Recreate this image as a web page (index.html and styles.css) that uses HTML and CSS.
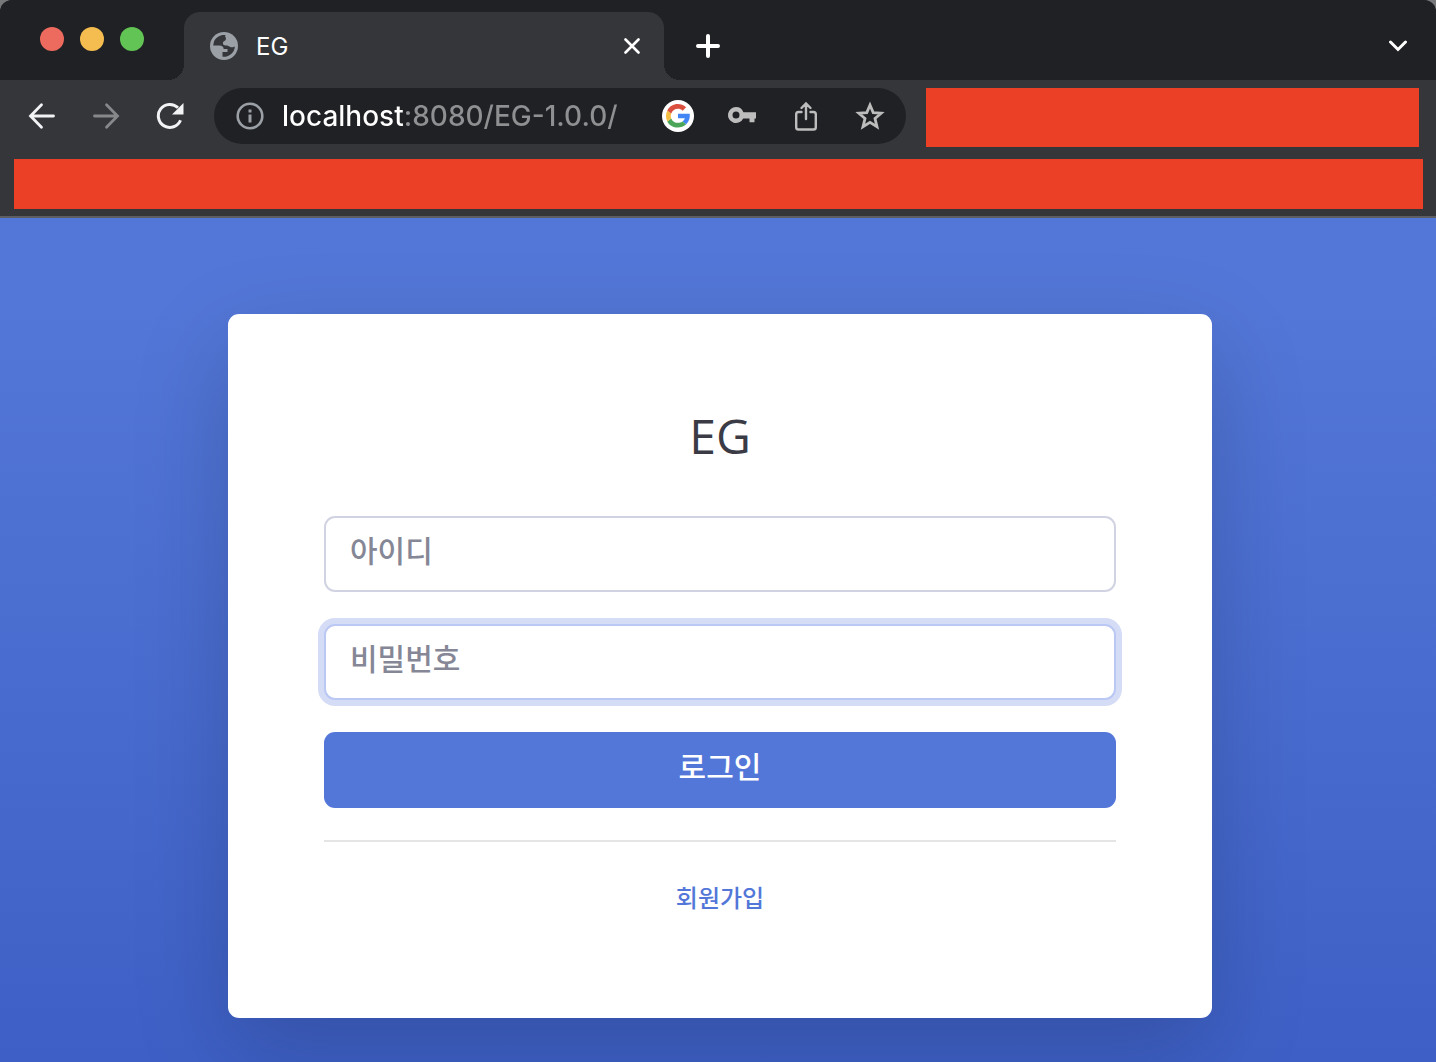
FILE: index.html
```html
<!DOCTYPE html>
<html lang="ko">

<head>
    <meta charset="utf-8">
    <meta name="viewport" content="width=device-width, initial-scale=1.0">
    <title>EG</title>
    <link rel="stylesheet" href="styles.css">
</head>

<body>
    <header class="browser">
        <div class="tabs">
            <div class="lights">
                <button class="light red" aria-label="Close window"></button>
                <button class="light yellow" aria-label="Minimize"></button>
                <button class="light green" aria-label="Zoom"></button>
            </div>
            <div class="tab">
                <svg class="globe" width="28" height="28" viewBox="0 0 28 28">
                    <circle cx="14" cy="14" r="14" fill="#9aa0a6" />
                    <path d="M15.5 3.1C11 2.4 6 4.9 4 9.5L3.2 13.5H9.5C12 13.5 13.7 15 13.7 17H17.5V20H12.5V24.8C19 25.5 24.8 20.5 24.8 14.5C23.5 15 23 15.5 21 15.2C19 14.8 18.3 13.2 16.5 13.5C14 13.8 12.5 12.5 13 10.5C13.5 8.8 16 9 16 6.5C15.8 5.3 14.5 4.5 15.5 3.1Z" fill="#35363a" />
                </svg>
                <span class="tab-title">EG</span>
                <button class="icon close" aria-label="Close tab">
                    <svg width="16" height="16" viewBox="0 0 16 16" fill="none" stroke="#fff" stroke-width="2.6" stroke-linecap="round"><path d="M1.5 1.5 14.5 14.5M14.5 1.5 1.5 14.5" /></svg>
                </button>
            </div>
            <button class="icon plus" aria-label="New tab">
                <svg width="24" height="24" viewBox="0 0 24 24" fill="none" stroke="#fff" stroke-width="4" stroke-linecap="round"><path d="M12 2V22M2 12H22" /></svg>
            </button>
            <button class="icon more" aria-label="Search tabs">
                <svg width="20" height="12" viewBox="0 0 20 12" fill="none" stroke="#fff" stroke-width="3" stroke-linecap="round"><path d="M2.5 2 10 9.5 17.5 2" /></svg>
            </button>
        </div>

        <div class="toolbar">
            <nav class="history">
                <button class="icon" aria-label="Back">
                    <svg width="28" height="28" viewBox="0 0 28 28" fill="none" stroke="#f1f3f4" stroke-width="2.8" stroke-linecap="round"><path d="M25.5 14H3M13.5 2.8 2.5 14 13.5 25.2" /></svg>
                </button>
                <button class="icon" aria-label="Forward">
                    <svg width="28" height="28" viewBox="0 0 28 28" fill="none" stroke="#87888a" stroke-width="2.8" stroke-linecap="round"><path d="M2.5 14H25M14.5 2.8 25.5 14 14.5 25.2" /></svg>
                </button>
                <button class="icon" aria-label="Reload">
                    <svg width="28" height="28" viewBox="0 0 28 28"><path d="M24.5 18.2A11.5 11.5 0 1 1 22 5.8" fill="none" stroke="#f1f3f4" stroke-width="3" /><path d="M27.5 1V12.5H16Z" fill="#f1f3f4" /></svg>
                </button>
            </nav>
            <div class="omnibox">
                <button class="icon" aria-label="Site information">
                    <svg width="28" height="28" viewBox="0 0 28 28"><circle cx="14" cy="14" r="12.3" fill="none" stroke="#9aa0a6" stroke-width="2.6" /><path d="M12.5 7.5H15.5V10.5H12.5ZM12.5 12.5H15.5V20.5H12.5Z" fill="#9aa0a6" /></svg>
                </button>
                <input class="url" type="text" value="localhost:8080/EG-1.0.0/" aria-label="Address" spellcheck="false">
                <div class="actions">
                    <button class="icon" aria-label="Google">
                        <svg width="32" height="32" viewBox="0 0 32 32">
                            <circle cx="16" cy="16" r="16" fill="#fff" />
                            <path d="M16 13.8H27.7C28.3 17.8 27 21.7 24.2 24.3L20.5 21.4C21.7 20.6 22.5 19.4 22.8 18.2H16Z" fill="#4285f4" />
                            <path d="M5.3 21.4 9.2 18.4C11 22.9 16.4 24.2 20.5 21.4L24.2 24.3C18.2 29.8 8.8 28.2 5.3 21.4Z" fill="#4ba65a" />
                            <path d="M5.3 10.6 9.2 13.6C8.6 15.2 8.6 16.8 9.2 18.4L5.3 21.4C3.6 18 3.6 14 5.3 10.6Z" fill="#f5bd41" />
                            <path d="M5.3 10.6C8.8 3.3 18.2 2 24.1 7.3L20.7 10.7C16.8 7.1 11 8.7 9.2 13.6Z" fill="#db4f3f" />
                        </svg>
                    </button>
                    <button class="icon" aria-label="Passwords">
                        <svg width="32" height="32" viewBox="0 0 32 32" fill="#bdbdbd"><path fill-rule="evenodd" d="M10 7A8 8 0 1 0 17.2 18.4H23.5V22.3H28.5V18.4H30V12.3H17.4A8 8 0 0 0 10 7ZM10 11.5A3.5 3.5 0 1 1 10 18.5A3.5 3.5 0 1 1 10 11.5Z" /></svg>
                    </button>
                    <button class="icon" aria-label="Share">
                        <svg width="32" height="32" viewBox="0 0 32 32" fill="none" stroke="#bdbdbd" stroke-width="2.4" stroke-linecap="round"><path d="M16 19V4M11.5 8 16 3.5 20.5 8M11.5 12H8.5Q6.200 12 6.2 14.3V27.200Q6.200 29.5 8.5 29.5H23.5Q25.8 29.5 25.8 27.2V14.3Q25.8 12 23.5 12H20.500" /></svg>
                    </button>
                    <button class="icon" aria-label="Bookmark">
                        <svg width="32" height="32" viewBox="0 0 32 32" fill="none" stroke="#bdbdbd" stroke-width="2.8"><path d="M16 5 19.2 12.6 27.2 13.2 21 18.5 23 26.7 16 22.3 9 26.7 11 18.500 4.800 13.2 12.800 12.6Z" /></svg>
                    </button>
                </div>
            </div>
            <div class="redacted"></div>
        </div>
        <div class="bookmarks">
            <div class="redacted"></div>
        </div>
    </header>

    <main>
        <form class="card">
            <h1>EG</h1>
            <input class="field" type="text" placeholder="아이디" aria-label="아이디">
            <input class="field active" type="password" placeholder="비밀번호" aria-label="비밀번호">
            <button class="login" type="submit">로그인</button>
            <hr>
            <a href="#">회원가입</a>
        </form>
    </main>
</body>

</html>
```
FILE: styles.css
```css
* {
    box-sizing: border-box;
    margin: 0;
}

body {
    display: flex;
    flex-direction: column;
    min-height: 100vh;
    background: #77787a;
    font-family: Inter, "Noto Sans CJK KR", sans-serif;
}

button {
    border: 0;
    padding: 0;
    font-family: inherit;
    cursor: pointer;
}

svg {
    display: block;
}

.icon {
    flex: none;
    background: none;
}

/* browser window */

.browser {
    background: #35363a;
    border-bottom: 2px solid #5d5e62;
    border-radius: 12px 12px 0 0;
    overflow: hidden;
}

.tabs {
    display: flex;
    align-items: flex-end;
    height: 80px;
    background: #202124;
}

.lights {
    display: flex;
    gap: 16px;
    width: 184px;
    padding: 0 0 29px 40px;
}

.light {
    width: 24px;
    height: 24px;
    border-radius: 50%;
}

.red {
    background: #ed6a5e;
}

.yellow {
    background: #f5bd4f;
}

.green {
    background: #61c454;
}

.tab {
    position: relative;
    display: flex;
    align-items: center;
    width: 480px;
    height: 68px;
    padding: 0 24px 0 26px;
    background: #35363a;
    border-radius: 16px 16px 0 0;
}

/* the curved feet of the tab */
.tab::before,
.tab::after {
    content: "";
    position: absolute;
    bottom: 0;
    width: 16px;
    height: 16px;
}

.tab::before {
    right: 100%;
    background: radial-gradient(circle at 0 0, #202124 16px, #35363a 16px);
}

.tab::after {
    left: 100%;
    background: radial-gradient(circle at 100% 0, #202124 16px, #35363a 16px);
}

.tab-title {
    margin-left: 18px;
    color: #fff;
    font-size: 24px;
}

.close {
    margin-left: auto;
}

.plus {
    padding: 22px 32px;
}

.more {
    margin-left: auto;
    padding: 28px;
}

.toolbar {
    display: flex;
    gap: 20px;
    padding: 8px 17px 0 28px;
}

.history {
    display: flex;
    align-items: center;
    gap: 36px;
    height: 56px;
    margin-right: 10px;
}

.omnibox {
    display: flex;
    align-items: center;
    flex: none;
    width: 692px;
    height: 56px;
    padding: 0 20px 0 22px;
    background: #202124;
    border-radius: 28px;
}

.url {
    flex: 1;
    min-width: 0;
    margin: 0 16px 0 18px;
    padding: 0;
    border: 0;
    outline: 0;
    /* the host is white, the rest of the address is grey */
    background: linear-gradient(to right, #fff 121px, #8f9092 121px);
    -webkit-background-clip: text;
    background-clip: text;
    color: transparent;
    font-family: inherit;
    font-size: 28px;
    font-weight: 500;
}

.actions {
    display: flex;
    align-items: center;
    gap: 32px;
}

.redacted {
    flex: 1;
    background: #eb4026;
}

.toolbar .redacted {
    height: 59px;
}

.bookmarks {
    display: flex;
    height: 69px;
    padding: 12px 13px 7px 14px;
}

/* login page */

main {
    flex: 1;
    padding: 96px 224px 44px 228px;
    background: linear-gradient(#5377d8 10%, #3e60c6);
    overflow: hidden;
}

.card {
    display: flex;
    flex-direction: column;
    gap: 32px;
    padding: 96px;
    background: #fff;
    border-radius: 11px;
    box-shadow: 0 32px 96px rgba(0, 0, 0, 0.175);
    text-align: center;
}

h1 {
    margin-bottom: 22px;
    color: #3a3b45;
    font-family: "Open Sans", sans-serif;
    font-size: 48px;
    font-weight: 400;
    line-height: 52px;
}

.field,
.login {
    width: 100%;
    height: 76px;
    padding: 0 24px 10px;
    border-radius: 11px;
    font-family: "Noto Sans CJK KR", sans-serif;
    font-size: 30px;
    font-weight: 500;
}

.field {
    border: 2px solid #d1d3e2;
    outline: 0;
}

.field::placeholder {
    color: #858796;
}

.field.active {
    border-color: #bac8f3;
    box-shadow: 0 0 0 6px #d5dcf5;
}

.login {
    background: #5377d8;
    color: #fff;
}

hr {
    width: 100%;
    border: 0;
    border-top: 2px solid #e5e5e5;
}

.card a {
    align-self: center;
    padding-bottom: 2px;
    color: #5377d8;
    font-family: "Noto Sans CJK KR", sans-serif;
    font-size: 24px;
    font-weight: 500;
    line-height: 46px;
    text-decoration: none;
}
```
